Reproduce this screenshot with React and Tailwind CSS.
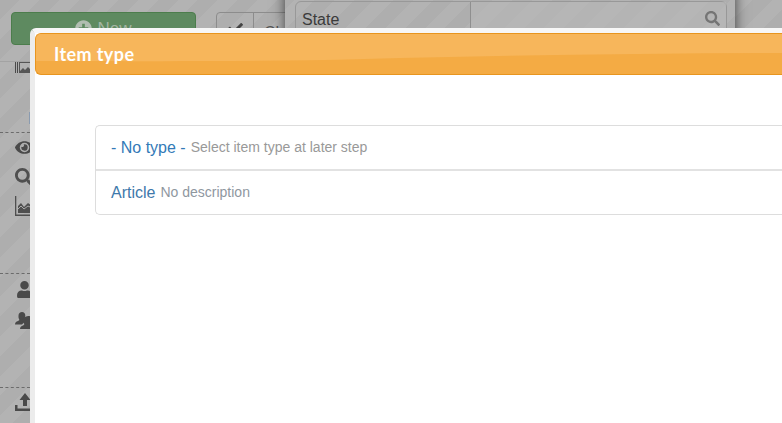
import React from "react";
import { FaEye, FaSearch, FaUser, FaPlusCircle, FaCheck } from "react-icons/fa";

const stripes = "bg-[repeating-linear-gradient(135deg,#aeaeae_0px,#aeaeae_14px,#b3b3b3_14px,#b3b3b3_28px)]";

function Dash() {
  return <div className="h-0 w-[30px] border-t border-dashed border-[#6b6b6b]" />;
}

function ImageIcon() {
  return (
    <svg viewBox="0 0 17 12" className="h-[12px] w-[17px]" fill="#4a4a4a">
      <rect x="0" y="0" width="1" height="11" />
      <rect x="2" y="0" width="1" height="11" />
      <path d="M4 0h13v11H4z" fill="#555" />
      <path d="M5 1h11v7l-3-3-3 3-2-2-3 3z" fill="#b1b1b1" />
    </svg>
  );
}

function ChartIcon() {
  return (
    <svg viewBox="0 0 18 20" className="h-[20px] w-[18px]" fill="#4f4f4f">
      <path d="M0 0h1.300v18.500H18V20H0z" />
      <path d="M3 17V10l3-3 3 4 4-4 4 3v7z" />
      <path d="M3 13l3-3 3 3 4-3 4 2" stroke="#aaa" strokeWidth="1" fill="none" />
    </svg>
  );
}

function UsersIcon() {
  return (
    <svg viewBox="0 0 20 18" className="h-[18px] w-[20px]" fill="#4a4a4a">
      <path d="M7 0c2 0 3.300 1.500 3.300 3.500S9.300 7 8.700 8c-.4.8 0 1.300 1 1.800L7 12.500H0c0-2 1-2.800 3-3.600 1.300-.5 1.600-1 1-2C3.400 6 3.500 4.800 3.500 3.500 3.500 1.500 5 0 7 0z" />
      <path d="M14 4c2 0 3.300 1.500 3.300 3.500s-.7 3-1.400 4c-.5.8-.1 1.400 1.100 1.900 1.600.6 3 1.300 3 3.600H5c0-2.200 1.400-3 3-3.600 1.300-.5 1.600-1.100 1-1.900-.7-1-1.300-2.200-1.300-4C7.700 5.500 12 4 14 4z" />
    </svg>
  );
}

function UploadIcon() {
  return (
    <svg viewBox="0 0 18 18" className="h-[18px] w-[18px]" fill="#4a4a4a">
      <path d="M10 0l5.500 7H12v6H8V7H4.500z" />
      <path d="M0 12h2.500v3.500H18V18H0z" />
    </svg>
  );
}

export default function App() {
  return (
    <div className={`relative h-[423px] w-[782px] overflow-hidden ${stripes} font-['Liberation_Sans',Arial,sans-serif]`}>
      {/* page behind the overlay */}
      <div className="flex items-start pl-[11px] pt-3">
        <div className="flex h-[33px] w-[185px] items-center justify-center gap-[5px] rounded border border-[#4c7d4c] bg-[#5e8a60] text-[17px] text-[#a3b5a3]">
          <FaPlusCircle className="text-[17px] text-[#b1bdb1]" />
          <span>New</span>
        </div>
        <div className="ml-5 flex h-[33px] rounded-l border border-[#8c8c8c]">
          <div className="flex w-[37px] items-center justify-center border-r border-[#8c8c8c]">
            <FaCheck className="text-[15px] text-[#444]" />
          </div>
          <div className="w-[40px] pl-[10px] pt-[8px] text-[16px] text-[#555]">Ch</div>
        </div>
      </div>

      <div className="mt-4 h-0 w-[30px] border-t border-[#a3a3a3]" />
      <div className="flex flex-col">
        <div className="pl-[15px]"><ImageIcon /></div>
        <div className="mt-[38px] ml-[29px] h-3 w-px bg-[#8a9bb0]" />
        <div className="mt-[8px]"><Dash /></div>
        <div className="mt-[5px] pl-[15px]"><FaEye className="text-[19px] text-[#4a4a4a]" /></div>
        <div className="mt-[11px] pl-[15px]"><FaSearch className="text-[18px] text-[#4f4f4f]" /></div>
        <div className="mt-[10px] pl-[15px]"><ChartIcon /></div>
        <div className="mt-[57px]"><Dash /></div>
        <div className="mt-[7px] pl-[16px]"><FaUser className="text-[17px] text-[#4a4a4a]" /></div>
        <div className="mt-[14px] pl-[15px]"><UsersIcon /></div>
        <div className="mt-[57px]"><Dash /></div>
        <div className="mt-[5px] pl-[15px]"><UploadIcon /></div>
      </div>

      {/* filter window behind the overlay */}
      <div className={`absolute left-[285px] top-[-10px] h-[60px] w-[450px] pl-[10px] pr-2 pt-[11px] shadow-[0_0_12px_rgba(0,0,0,0.65)] ${stripes}`}>
        <div className="flex h-[40px] rounded-md border border-[#989898] text-[16px] text-[#3b3b3b]">
          <div className="w-[174px] pl-[6px] pt-[6px]">State</div>
          <div className="flex flex-1 justify-end border-l border-[#8f8f8f] bg-[#b8b8b8]/60 pr-[6px] pt-[9px]">
            <FaSearch className="text-[15px] text-[#757575]" />
          </div>
        </div>
      </div>

      {/* modal */}
      <div className="absolute left-[30px] top-[28px] h-[420px] w-[790px] rounded-tl-md border-[5px] border-r-0 border-b-0 border-l-[#ececec] border-t-[#f7f7f7] bg-white">
        <div className="relative flex h-[42px] items-center overflow-hidden rounded-l-md border-y border-l border-[#e8951f] bg-[#f4ab44] pl-[18px]">
          <svg className="absolute inset-0 h-full w-full" viewBox="0 0 790 40" preserveAspectRatio="none">
            <path d="M0 0H790V19C640 19 480 21 330 25C220 28 100 27 0 27Z" fill="#f7b65b" />
          </svg>
          <span className="relative font-['Lato',sans-serif] text-[18px] font-bold tracking-[0.4px] text-white">Item type</span>
        </div>

        <div className="ml-[60px] mt-[50px] flex w-[730px] flex-col rounded-l-[5px] border-y border-l border-[#dddddd]">
          <div className="flex h-[45px] items-center gap-[5px] border-b-2 border-[#e2e2e2] pl-[15px]">
            <span className="text-[16px] text-[#337ab7]">- No type -</span>
            <span className="text-[14px] text-[#999999]">Select item type at later step</span>
          </div>
          <div className="flex h-[43px] items-center gap-[5px] pl-[15px]">
            <span className="text-[16px] text-[#3e79ab]">Article</span>
            <span className="text-[14px] text-[#8f979f]">No description</span>
          </div>
        </div>
      </div>
    </div>
  );
}
